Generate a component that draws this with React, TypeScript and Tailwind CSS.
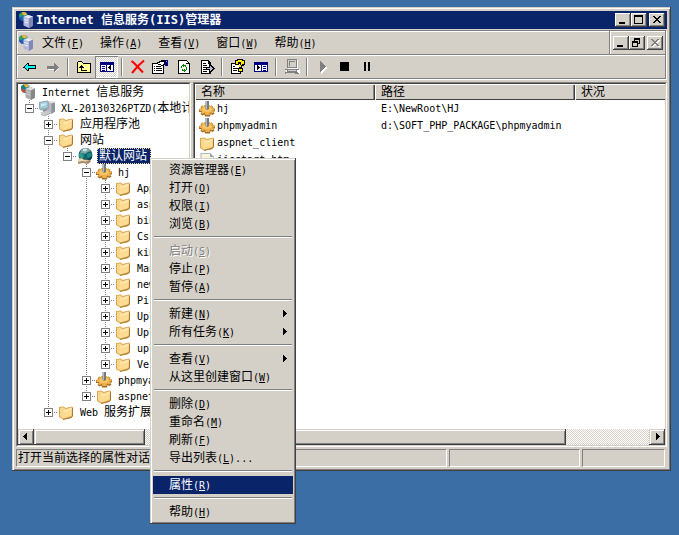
import type { ReactNode } from 'react';

type IconName = 'server' | 'root' | 'computer' | 'folder' | 'globe' | 'gear' | 'page';

// Each cell of a branch: ' ' empty, '|' line, '+' collapsed, '-' expanded, 'L' / 'l' last child
type TreeRow = { cells: string; icon: IconName; label: string; selected?: boolean };

const tree: TreeRow[] = [
  { cells: '', icon: 'root', label: 'Internet 信息服务' },
  { cells: 'l', icon: 'computer', label: 'XL-20130326PTZD(本地计算机)' },
  { cells: ' +', icon: 'folder', label: '应用程序池' },
  { cells: ' -', icon: 'folder', label: '网站' },
  { cells: ' |l', icon: 'globe', label: '默认网站', selected: true },
  { cells: ' | -', icon: 'gear', label: 'hj' },
  { cells: ' | |+', icon: 'folder', label: 'App' },
  { cells: ' | |+', icon: 'folder', label: 'asp' },
  { cells: ' | |+', icon: 'folder', label: 'bin' },
  { cells: ' | |+', icon: 'folder', label: 'Css' },
  { cells: ' | |+', icon: 'folder', label: 'kin' },
  { cells: ' | |+', icon: 'folder', label: 'Man' },
  { cells: ' | |+', icon: 'folder', label: 'new' },
  { cells: ' | |+', icon: 'folder', label: 'Pi' },
  { cells: ' | |+', icon: 'folder', label: 'Upl' },
  { cells: ' | |+', icon: 'folder', label: 'Upl' },
  { cells: ' | |+', icon: 'folder', label: 'upl' },
  { cells: ' | |L', icon: 'folder', label: 'Ver' },
  { cells: ' | +', icon: 'gear', label: 'phpmya' },
  { cells: ' | L', icon: 'folder', label: 'aspnet' },
  { cells: ' L', icon: 'folder', label: 'Web 服务扩展' },
];

const files: { icon: IconName; name: string; path: string }[] = [
  { icon: 'gear', name: 'hj', path: 'E:\\NewRoot\\HJ' },
  { icon: 'gear', name: 'phpmyadmin', path: 'd:\\SOFT_PHP_PACKAGE\\phpmyadmin' },
  { icon: 'folder', name: 'aspnet_client', path: '' },
  { icon: 'page', name: 'iisstart.htm', path: '' },
];

const menus = [
  ['文件', 'F'],
  ['操作', 'A'],
  ['查看', 'V'],
  ['窗口', 'W'],
  ['帮助', 'H'],
];

type MenuItem = { text: string; hot: string; tail?: string; sub?: boolean; disabled?: boolean; active?: boolean };

const contextMenu: MenuItem[][] = [
  [
    { text: '资源管理器', hot: 'E' },
    { text: '打开', hot: 'O' },
    { text: '权限', hot: 'I' },
    { text: '浏览', hot: 'B' },
  ],
  [
    { text: '启动', hot: 'S', disabled: true },
    { text: '停止', hot: 'P' },
    { text: '暂停', hot: 'A' },
  ],
  [
    { text: '新建', hot: 'N', sub: true },
    { text: '所有任务', hot: 'K', sub: true },
  ],
  [
    { text: '查看', hot: 'V', sub: true },
    { text: '从这里创建窗口', hot: 'W' },
  ],
  [
    { text: '删除', hot: 'D' },
    { text: '重命名', hot: 'M' },
    { text: '刷新', hot: 'F' },
    { text: '导出列表', hot: 'L', tail: '...' },
  ],
  [{ text: '属性', hot: 'R', active: true }],
  [{ text: '帮助', hot: 'H' }],
];

// Latin runs are set smaller so that they take half the width of a Chinese glyph
function Mixed({ text }: { text: string }) {
  return (
    <>
      {text.split(/([\x20-\x7e]+)/).map((part, i) =>
        i % 2 ? (
          <span key={i} className="text-[10px]">
            {part}
          </span>
        ) : (
          part
        ),
      )}
    </>
  );
}

function Hotkey({ text, hot, tail = '' }: { text: string; hot: string; tail?: string }) {
  return (
    <span className="whitespace-pre">
      {text}
      <span className="text-[10px]">
        (<span className="underline underline-offset-1">{hot}</span>){tail}
      </span>
    </span>
  );
}

function Pic({ w = 16, h = 16, smooth, children }: { w?: number; h?: number; smooth?: boolean; children: ReactNode }) {
  return (
    <svg
      width={w}
      height={h}
      viewBox={`0 0 ${w} ${h}`}
      shapeRendering={smooth ? 'auto' : 'crispEdges'}
      className="block shrink-0"
      aria-hidden="true"
    >
      {children}
    </svg>
  );
}

function Icon({ name }: { name: IconName }) {
  if (name === 'server' || name === 'root') {
    const gray = name === 'root';
    return (
      <Pic smooth>
        <circle cx="5.5" cy="4.5" r="4.5" fill="#1583a8" />
        <path d="M1 2.5L4 0.5l2 1L4 4 1.5 5z" fill={gray ? '#1b7f7c' : '#38a04a'} />
        <path d="M4 0l4 .5L9 3 6 3.500 4.500 2z" fill="#f0b93a" />
        <path d="M1 5l3 0 2 3-2 1-2.500-2z" fill={gray ? '#c5502c' : '#2a59b5'} />
        <path d="M5.500 5l4.500-2 5 1.500v9L11 16l-5.500-2.500z" fill={gray ? '#a9abad' : '#b4b8dc'} />
        <path d="M5.500 5l4.500-2 5 1.500-4 2z" fill={gray ? '#dcdddd' : '#e6e7f7'} />
        <path d="M11 6.500l4-2v9L11 16z" fill={gray ? '#85888b' : '#8387b5'} />
        <path d="M6.500 7l3.500 1v1L6.500 8zM6.500 9.500l3.500 1v1l-3.500-1z" fill={gray ? '#d3d4d5' : '#f3f3fc'} />
      </Pic>
    );
  }
  if (name === 'computer') {
    return (
      <Pic smooth>
        <path d="M8 2l4-1 4 1.500v9L12 14l-4-2z" fill="#b6bcc2" />
        <path d="M8 2l4-1 4 1.500-3.500 1z" fill="#dfe3e6" />
        <path d="M12.500 3.500l3.500-1v9L12.500 14z" fill="#8b9299" />
        <path d="M0 2l8.500-1.500L10 2v7l-8 1.500L0 9z" fill="#9aa5ae" />
        <path d="M1 3l7.500-1.500v6L1 9z" fill="#9ecbdc" />
        <path d="M2 4l5.500-1v2L2 6.500z" fill="#cdeaf3" />
        <path d="M4 10l4-1v3H4z" fill="#868e96" />
        <path d="M1 12.500l7-2 4 2L6 15.500z" fill="#c3c9ce" />
        <path d="M2 14l4 1.500L11 13v1l-5 2-4-1z" fill="#818a92" />
      </Pic>
    );
  }
  if (name === 'folder') {
    return (
      <Pic smooth>
        <path d="M1 3l5-.5L7.500 4l6.500-1.500 1 1V12l-1.500 2L5 15.500 1 13z" fill="#d9a452" />
        <path d="M2 3.800l4-.4L7.300 5 13.500 3.500V11L5 14.500 2 12.500z" fill="#f7d68d" />
        <path d="M4.500 6.500L10 6l1-1.500 3-1L13.500 12 5.500 14.500l-1.500-1z" fill="#fddb8f" />
        <path d="M5 7l5.500-.5 1-1.500 2-.5" stroke="#fff2cc" strokeWidth="1" fill="none" />
        <path d="M14.500 4v8l-1.500 1.500-8 2" stroke="#a8772f" strokeWidth="1" fill="none" />
      </Pic>
    );
  }
  if (name === 'globe') {
    return (
      <Pic smooth>
        <circle cx="8.500" cy="7" r="7" fill="#11656b" />
        <path d="M4 2l3-2h4l3 3-3 1-3 2-3-1-2 1z" fill="#7ba8a4" />
        <path d="M6 1l3-.5L10.500 2 8 3.500 6 3z" fill="#dbe2df" />
        <path d="M2 6l3-1 2 2-1 3-2 1-2-3z" fill="#2c9c90" />
        <path d="M10 6l3-1 2 2-3 3-2-1z" fill="#1f8a88" />
        <path d="M14.500 8L15 10l-3 3-2-1z" fill="#0b3d48" />
        <path d="M1 11l4-1 2 1.500 6 .5 1 1.500L11 16l-5-1-5 1z" fill="#a38c66" />
        <path d="M1 11l4-.5 2 1.500 5 .5-3 1-4-.5-4 1z" fill="#eadcb8" />
      </Pic>
    );
  }
  if (name === 'gear') {
    return (
      <Pic smooth>
        <path
          d="M5.500 5.500V4h5v1.500l2-1 2 1.500-1 1.500H16v3h-2l1.500 2-2 1.500-2-1L11 15.500H6L5.500 13.500l-2 1-2-1.500 1-2H0v-3l2.500-.5L1.500 6l2-1.500z"
          fill="#a06c25"
        />
        <path
          d="M5.500 5V4h5v1.500l2-1 1.500 1.500-1 1.500H15.500v2h-2l1 2-1.500 1-2-1L10.500 14H6.500L6 12l-2.500 1L2 12l1-2H.5V8L3 7.500 2 6l1.500-1z"
          fill="#efb048"
        />
        <ellipse cx="8" cy="8.500" rx="4.500" ry="2.500" fill="#f7c768" />
        <path d="M6.500 0h3.500v8l-1.500 1L6.500 8z" fill="#737a82" />
        <path d="M7 0h1v8H7z" fill="#b3bac1" />
      </Pic>
    );
  }
  return (
    <Pic smooth>
      <path d="M1.500 1h10L15 4.500V15H1.500z" fill="#a9bac8" />
      <path d="M2.500 2H11l3 3v9H2.500z" fill="#fbf3d8" />
      <path d="M5 6h6v5H5z" fill="#4f93c4" />
      <path d="M6 8h3v1H6zM8 10h2v1H8z" fill="#58ad5c" />
      <path d="M11 1.500V5h3.500z" fill="#8fa5b6" />
    </Pic>
  );
}

function Branch({ cell }: { cell: string }) {
  const box = cell !== ' ' && cell !== '|';
  const open = cell === '-' || cell === 'l';
  const last = cell === 'L' || cell === 'l';
  return (
    <Pic w={19}>
      {cell !== ' ' && (
        <path d={last ? 'M9.5 0V8' : 'M9.5 0V16'} stroke="#808080" strokeDasharray="1 1" fill="none" />
      )}
      {box && (
        <>
          <path d="M9 8.5H19" stroke="#808080" strokeDasharray="1 1" />
          <rect x="5" y="4" width="9" height="9" fill="#808080" />
          <rect x="6" y="5" width="7" height="7" fill="#fff" />
          <path d={open ? 'M7 8h5v1H7z' : 'M7 8h5v1H7zM9 6h1v5H9z'} fill="#000" />
        </>
      )}
    </Pic>
  );
}

function WinButton({ label, disabled, children }: { label: string; disabled?: boolean; children: ReactNode }) {
  return (
    <button
      aria-label={label}
      disabled={disabled}
      className="block h-[14px] w-4 bg-[#d4d0c8] shadow-[inset_-1px_-1px_0_#404040,inset_1px_1px_0_#fff,inset_-2px_-2px_0_#808080]"
    >
      <Pic h={14}>{children}</Pic>
    </button>
  );
}

const closeShape = 'M4 3h2v1h1v1h2V4h1V3h2v1h-1v1h-1v1H9v1h1v1h1v1h1v1h-2V9H9V8H7v1H6v1H4V9h1V8h1V7h1V6H6V5H5V4H4z';

function ToolButton({ label, pressed, children }: { label: string; pressed?: boolean; children: ReactNode }) {
  return (
    <button
      aria-label={label}
      aria-pressed={pressed}
      className={
        pressed
          ? 'flex h-[22px] w-[23px] items-center justify-center bg-[repeating-conic-gradient(#fff_0_25%,#d4d0c8_0_50%)] bg-[length:2px_2px] shadow-[inset_1px_1px_0_#808080,inset_-1px_-1px_0_#fff]'
          : 'flex h-[22px] w-[23px] items-center justify-center'
      }
    >
      {children}
    </button>
  );
}

function Divider() {
  return (
    <div className="flex h-[18px] w-2 justify-center">
      <div className="w-0.5 border-r border-l border-r-white border-l-[#808080]" />
    </div>
  );
}

function Toolbar() {
  return (
    <div className="flex h-6 items-center border-t border-[#808080] pl-px shadow-[inset_0_1px_0_#fff]">
      <ToolButton label="后退">
        <Pic>
          <path d="M1 8h1V7h1V6h1V5h1V4h2v2h7v4H7v2H5v-1H4v-1H3V9H1z" fill="#000" />
          <path d="M3 8V7h1V6h1V5h1v2h7v2H6v2H5v-1H4V9H3z" fill="#00ffff" />
        </Pic>
      </ToolButton>
      <ToolButton label="前进">
        <Pic>
          <path d="M15 9h-1v1h-1v1h-1v1h-1v1h-1v-2H3v-1h7V9z" fill="#fff" />
          <path d="M2 7h7V4h1v1h1v1h1v1h1v1h1v1h-1v1h-1v1h-1v1h-1v1H9v-3H2z" fill="#808080" />
        </Pic>
      </ToolButton>
      <Divider />
      <ToolButton label="向上">
        <Pic>
          <path d="M2 2h4v1h1v1h8v10H1V3h1z" fill="#000" />
          <path d="M2 3h4v1h1v1h7v8H2z" fill="#ffff99" />
          <path d="M5 6h1v1h1v1h1v1H6v2h5v1H5V9H3V8h1V7h1z" fill="#000" />
        </Pic>
      </ToolButton>
      <ToolButton label="显示控制台树" pressed>
        <Pic>
          <path d="M1 3h14v10H1z" fill="#000080" />
          <path d="M2 6h5v6H2zM8 6h6v6H8z" fill="#fff" />
          <path d="M3 7h3v1H3zM3 9h3v1H3zM3 11h3v1H3z" fill="#000080" />
          <path d="M12 6v5h-1v-1h-1V9H9V8h1V7h1V6z" fill="#000" />
        </Pic>
      </ToolButton>
      <Divider />
      <ToolButton label="删除">
        <Pic smooth>
          <path d="M1.500 2L4 4l9 9.500M14 1.500L8 7l-6 7" stroke="#ff0000" strokeWidth="2" fill="none" />
        </Pic>
      </ToolButton>
      <ToolButton label="属性">
        <Pic w={17}>
          <path d="M0 4h12v11H0z" fill="#000" />
          <path d="M1 5h10v9H1z" fill="#fff" />
          <path d="M2 7h1v1H2zM4 7h5v1H4zM2 9h1v1H2zM4 9h6v1H4zM2 11h1v1H2zM4 11h6v1H4z" fill="#000" />
          <path d="M5 3h2V2h2V1h4v1h1v4h-2v1H9V6H6V5H5z" fill="#000" />
          <path d="M6 4h2V3h4v2h-1v1H9V5H6z" fill="#fff" />
          <path d="M13 1h3v6h-3z" fill="#000080" />
          <path d="M14 2h1v1h-1z" fill="#87a8e8" />
        </Pic>
      </ToolButton>
      <ToolButton label="刷新">
        <Pic>
          <path d="M2 1h9v1h1v1h1v1h1v11H2z" fill="#000" />
          <path d="M3 2h7v3h3v9H3z" fill="#fff" />
          <path d="M10 2h1v1h1v1h-2z" fill="#fff" />
          <path d="M6 6h1V5h1v1h2v2H9V7H8v1H7V7H6v2H5V7h1zM10 8h1v3h-1v1H9v1H8v-1H6v-2h1v1h1v-1h1v1h1z" fill="#008000" />
        </Pic>
      </ToolButton>
      <ToolButton label="导出列表">
        <Pic>
          <path d="M2 1h8v1h1v1h1v12H2z" fill="#000" />
          <path d="M3 2h6v3h2v9H3z" fill="#fff" />
          <path d="M4 4h3v1H4zM4 6h4v1H4zM4 8h3v1H4zM4 10h3v1H4zM4 12h4v1H4z" fill="#000" />
          <path d="M7 8h3V5h2v1h1v1h1v1h1v1h1v1h-1v1h-1v1h-1v1h-1v1h-2v-3H7z" fill="#000" />
          <path d="M8 9h3V7h1v1h1v1h1v1h-1v1h-1v1h-1v-2H8z" fill="#b8b8dc" />
        </Pic>
      </ToolButton>
      <Divider />
      <ToolButton label="帮助">
        <Pic>
          <path d="M1 4h10v11H1z" fill="#000" />
          <path d="M2 5h8v9H2z" fill="#fff" />
          <path d="M3 7h2v1H3zM3 9h5v1H3zM3 11h4v1H3z" fill="#000" />
          <path d="M5 1h2V0h6v1h2v5h-1v1h-2v2h1v4H8V9h1V6h1V5H9v1H5z" fill="#000" />
          <path d="M6 2h2V1h4v1h2v3h-2v1h-1v2H9V6h2V3H8v2H6zM9 10h3v2H9z" fill="#ffe600" />
        </Pic>
      </ToolButton>
      <ToolButton label="显示操作窗格">
        <Pic>
          <path d="M1 3h14v10H1z" fill="#000080" />
          <path d="M2 6h6v6H2zM9 6h5v6H9z" fill="#fff" />
          <path d="M10 7h3v1h-3zM10 9h3v1h-3zM10 11h3v1h-3z" fill="#000080" />
          <path d="M4 6v5h1v-1h1V9h1V8H6V7H5V6z" fill="#000" />
        </Pic>
      </ToolButton>
      <Divider />
      <ToolButton label="连接">
        <Pic>
          <path d="M4 1h10v9H4zM2 10h14v5H2z" fill="#fff" />
          <path d="M3 0h10v9H3zM1 10h14v1h-2v2h1v1h1v1H1v-2h2v-2H1z" fill="#808080" />
          <path d="M4 1h8v7H4zM4 11h8v1H4zM2 14h9v1H2z" fill="#d4d0c8" />
          <path d="M5 2h6v5H5z" fill="#808080" />
          <path d="M6 3h5v4H6z" fill="#d4d0c8" />
        </Pic>
      </ToolButton>
      <Divider />
      <ToolButton label="启动">
        <Pic>
          <path d="M6 3v12l6-6z" fill="#fff" />
          <path d="M5 2h1v1h1v1h1v1h1v1h1v1h1v1h-1v1H9v1H8v1H7v1H6v1H5z" fill="#808080" />
        </Pic>
      </ToolButton>
      <ToolButton label="停止">
        <Pic>
          <path d="M2 3h9v9H2z" />
        </Pic>
      </ToolButton>
      <ToolButton label="暂停">
        <Pic>
          <path d="M3 3h2v9H3zM7 3h2v9H7z" />
        </Pic>
      </ToolButton>
    </div>
  );
}

function ScrollButton({ label, d }: { label: string; d: string }) {
  return (
    <button
      aria-label={label}
      className="flex w-4 items-center justify-center bg-[#d4d0c8] shadow-[inset_-1px_-1px_0_#404040,inset_1px_1px_0_#d4d0c8,inset_2px_2px_0_#fff,inset_-2px_-2px_0_#808080]"
    >
      <Pic w={8} h={8}>
        <path d={d} />
      </Pic>
    </button>
  );
}

function ScrollBar({ thumb }: { thumb: string }) {
  return (
    <div className="flex h-4 shrink-0 bg-[repeating-conic-gradient(#fff_0_25%,#d4d0c8_0_50%)] bg-[length:2px_2px]">
      <ScrollButton label="向左滚动" d="M5 0v7H4V6H3V5H2V4H1V3h1V2h1V1h1V0z" />
      <div className="flex flex-1">
        <div
          className="bg-[#d4d0c8] shadow-[inset_-1px_-1px_0_#404040,inset_1px_1px_0_#d4d0c8,inset_2px_2px_0_#fff,inset_-2px_-2px_0_#808080]"
          style={{ width: thumb }}
        />
      </div>
      <ScrollButton label="向右滚动" d="M3 0v7h1V6h1V5h1V4h1V3H6V2H5V1H4V0z" />
    </div>
  );
}

function Pane({ className, children }: { className: string; children: ReactNode }) {
  return (
    <div
      className={`flex min-w-0 flex-col border border-[#808080] border-r-white border-b-white ${className}`}
    >
      <div className="flex min-h-0 flex-1 flex-col border border-[#404040] border-r-[#d4d0c8] border-b-[#d4d0c8] bg-white">
        {children}
      </div>
    </div>
  );
}

function ContextMenu() {
  return (
    <div
      role="menu"
      className="absolute top-[158px] left-[150px] w-[146px] bg-[#d4d0c8] p-[3px] shadow-[inset_-1px_-1px_0_#404040,inset_1px_1px_0_#d4d0c8,inset_2px_2px_0_#fff,inset_-2px_-2px_0_#808080]"
    >
      {contextMenu.map((group, i) => (
        <div key={i}>
          {i > 0 && (
            <div className="h-[9px] px-px pt-[3px]">
              <hr className="h-0.5 border-t border-b border-t-[#808080] border-b-white" />
            </div>
          )}
          {group.map((item) => (
            <button
              key={item.text}
              role="menuitem"
              disabled={item.disabled}
              className={`flex h-[18px] w-full items-center justify-between pr-1 pl-4 ${
                item.active ? 'bg-[#0a246a] text-white' : ''
              } ${item.disabled ? 'text-[#808080] [text-shadow:1px_1px_0_#fff]' : ''}`}
            >
              <Hotkey text={item.text} hot={item.hot} tail={item.tail} />
              {item.sub && (
                <Pic w={8} h={8}>
                  <path d="M2 0v7h1V6h1V5h1V4h1V3H5V2H4V1H3V0z" />
                </Pic>
              )}
            </button>
          ))}
        </div>
      ))}
    </div>
  );
}

export default function App() {
  return (
    <div className="relative flex min-h-screen flex-col overflow-hidden bg-[#3a6ea5] pt-[7px] pr-2 pb-16 pl-3 font-['DejaVu_Sans_Mono','Noto_Sans_CJK_SC',monospace] text-[12px] leading-4 text-black">
      <main className="flex flex-1 flex-col bg-[#d4d0c8] p-1 shadow-[inset_-1px_-1px_0_#404040,inset_1px_1px_0_#d4d0c8,inset_2px_2px_0_#fff,inset_-2px_-2px_0_#808080]">
        {/* Title bar */}
        <header className="flex h-[18px] items-center bg-[#0a246a] px-0.5 text-white">
          <Icon name="server" />
          <h1 className="flex-1 pl-0.5 font-bold whitespace-pre">Internet 信息服务(IIS)管理器</h1>
          <WinButton label="最小化">
            <path d="M4 9h6v2H4z" fill="#000" />
          </WinButton>
          <WinButton label="最大化">
            <path d="M3 2h9v9H3zM4 4v6h7V4z" fill="#000" fillRule="evenodd" />
          </WinButton>
          <div className="pl-0.5">
            <WinButton label="关闭">
              <path d={closeShape} fill="#000" />
            </WinButton>
          </div>
        </header>

        {/* Menu bar and toolbar */}
        <div className="mt-px mr-px border border-[#808080] shadow-[inset_1px_1px_0_#fff,1px_1px_0_#fff]">
          <div className="flex h-[23px]">
            <nav className="flex flex-1 items-center border-r border-[#808080] pt-px pl-px">
              <Icon name="server" />
              {menus.map(([text, hot]) => (
                <button key={hot} className="px-2">
                  <Hotkey text={text} hot={hot} />
                </button>
              ))}
            </nav>
            <div className="flex items-center border-l border-white px-0.5 pt-px">
              <WinButton label="最小化子窗口">
                <path d="M4 9h6v2H4z" />
              </WinButton>
              <WinButton label="还原子窗口">
                <path d="M5 2h6v6H9V7h1V4H6v1H5zM3 5h6v6H3zM4 7v3h4V7z" fillRule="evenodd" />
              </WinButton>
              <div className="pl-0.5">
                <WinButton label="关闭子窗口" disabled>
                  <path d={closeShape} fill="#fff" transform="translate(1 1)" />
                  <path d={closeShape} fill="#808080" />
                </WinButton>
              </div>
            </div>
          </div>
          <Toolbar />
        </div>

        {/* Console tree and details */}
        <div className="mt-[3px] flex min-h-0 flex-1 gap-0.5">
          <Pane className="w-[175px] shrink-0">
            <ul className="flex-1 overflow-hidden pl-0.5">
              {tree.map((row, i) => (
                <li key={i} className="flex h-4 items-center whitespace-pre">
                  {row.cells.split('').map((cell, j) => (
                    <Branch key={j} cell={cell} />
                  ))}
                  <Icon name={row.icon} />
                  <span
                    className={
                      row.selected
                        ? 'ml-1 bg-[#0a246a] pr-1 pl-0.5 text-white outline-1 -outline-offset-1 outline-dotted outline-[#f5db95]'
                        : 'ml-1 pl-0.5'
                    }
                  >
                    <Mixed text={row.label} />
                  </span>
                </li>
              ))}
            </ul>
            <ScrollBar thumb="80%" />
          </Pane>

          <Pane className="flex-1">
            <div className="flex-1 overflow-hidden">
              <table className="w-full table-fixed border-collapse text-left">
                <thead>
                  <tr className="h-4 bg-[#d4d0c8]">
                    {['名称', '路径', '状况'].map((name, i) => (
                      <th
                        key={name}
                        className={`p-0 pl-1.5 font-normal ${i === 0 ? 'w-[180px]' : i === 1 ? 'w-[200px]' : ''} ${
                          i < 2
                            ? 'shadow-[inset_1px_1px_0_#fff,inset_-1px_-1px_0_#404040,inset_-2px_-1px_0_#808080]'
                            : 'shadow-[inset_1px_1px_0_#fff,inset_0_-1px_0_#404040]'
                        }`}
                      >
                        {name}
                      </th>
                    ))}
                  </tr>
                </thead>
                <tbody>
                  {files.map((file) => (
                    <tr key={file.name} className="h-[17px]">
                      <td className="p-0 pl-1">
                        <div className="flex items-center gap-0.5">
                          <Icon name={file.icon} />
                          <Mixed text={file.name} />
                        </div>
                      </td>
                      <td className="p-0 pl-1.5">
                        <Mixed text={file.path} />
                      </td>
                      <td className="p-0" />
                    </tr>
                  ))}
                </tbody>
              </table>
            </div>
            <ScrollBar thumb="81%" />
          </Pane>
        </div>

        {/* Status bar */}
        <footer className="mt-0.5 flex h-[18px] gap-0.5 pr-0.5">
          <div className="min-w-0 flex-1 overflow-hidden border border-[#808080] border-r-white border-b-white pl-px whitespace-nowrap">
            打开当前选择的属性对话框。
          </div>
          <div className="w-[131px] border border-[#808080] border-r-white border-b-white" />
          <div className="w-[83px] border border-[#808080] border-r-white border-b-white" />
        </footer>
      </main>

      <ContextMenu />
    </div>
  );
}
